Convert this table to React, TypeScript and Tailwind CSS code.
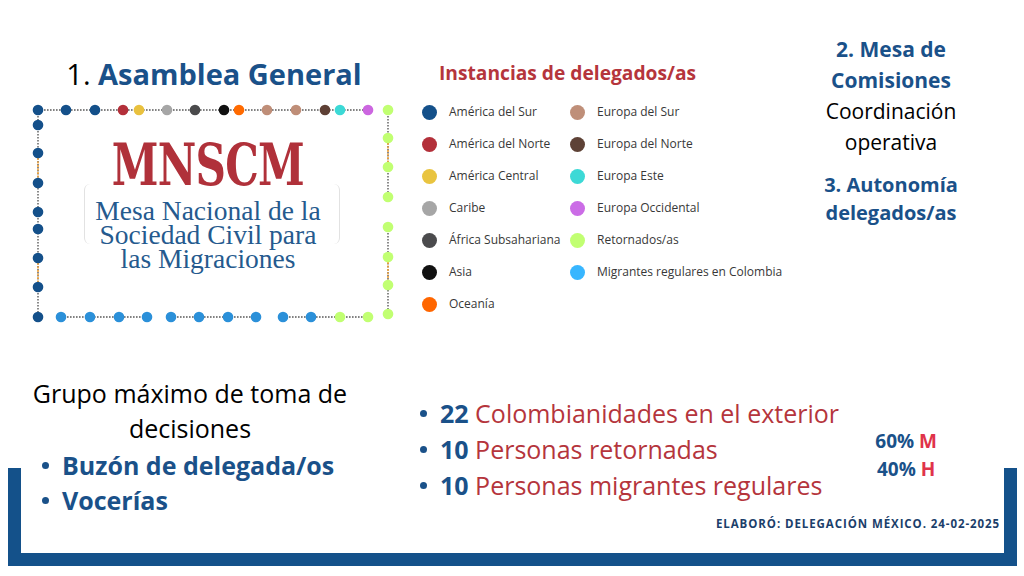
import React from "react";

const BLUE = "#1a5189";
const RED = "#b5353c";

type Dot = [number, number, string];

const C = {
  navy: "#14508a",
  red: "#b3303a",
  yellow: "#e9c13e",
  gray: "#a6a6a6",
  dark: "#4a4a4c",
  black: "#111111",
  orange: "#ff6a00",
  tan: "#bf8e78",
  brown: "#5e4035",
  cyan: "#3cd9d6",
  purple: "#cc66e0",
  lime: "#c1ff72",
  sky: "#2b90d9",
};

// frame dots, coordinates relative to the frame box
const frameDots: Dot[] = [
  // top row
  [10, 8, C.navy],
  [38, 8, C.navy],
  [67, 8, C.navy],
  [95, 8, C.red],
  [111, 8, C.yellow],
  [139, 8, C.gray],
  [167, 8, C.dark],
  [196, 8, C.black],
  [211, 8, C.orange],
  [239, 8, C.tan],
  [268, 8, C.tan],
  [297, 8, C.brown],
  [312, 8, C.cyan],
  [340, 8, C.purple],
  [360, 8, C.lime],
  // left column
  [10, 23, C.navy],
  [10, 51, C.navy],
  [10, 81, C.navy],
  [10, 110, C.navy],
  [10, 127, C.navy],
  [10, 156, C.navy],
  [10, 185, C.navy],
  [10, 215, C.navy],
  // right column
  [360, 36, C.lime],
  [360, 65, C.lime],
  [360, 95, C.lime],
  [360, 125, C.lime],
  [360, 155, C.lime],
  [360, 183, C.lime],
  [360, 212, C.lime],
  // bottom row
  [33, 215, C.sky],
  [62, 215, C.sky],
  [91, 215, C.sky],
  [119, 215, C.sky],
  [143, 215, C.sky],
  [171, 215, C.sky],
  [200, 215, C.sky],
  [228, 215, C.sky],
  [255, 215, C.sky],
  [283, 215, C.sky],
  [312, 215, C.lime],
  [340, 215, C.lime],
];

const grayLines = [
  [10, 8, 340, 8],
  [10, 8, 10, 215],
  [360, 8, 360, 95],
  [360, 125, 360, 215],
  [33, 215, 119, 215],
  [143, 215, 228, 215],
  [255, 215, 340, 215],
];

const orangeLines = [
  [10, 56, 10, 76],
  [10, 161, 10, 180],
  [360, 41, 360, 60],
  [360, 160, 360, 178],
];

const legendLeft: [string, string][] = [
  ["#14508a", "América del Sur"],
  ["#b3303a", "América del Norte"],
  ["#e9c440", "América Central"],
  ["#a6a6a6", "Caribe"],
  ["#4b4b4d", "África Subsahariana"],
  ["#111111", "Asia"],
  ["#ff6600", "Oceanía"],
];

const legendRight: [string, string][] = [
  ["#bf8f79", "Europa del Sur"],
  ["#5e4236", "Europa del Norte"],
  ["#3dd9d6", "Europa Este"],
  ["#cb6ce6", "Europa Occidental"],
  ["#c1ff72", "Retornados/as"],
  ["#38b6ff", "Migrantes regulares en Colombia"],
];

function DotFrame() {
  return (
    <svg
      className="absolute inset-0"
      width={372}
      height={226}
      viewBox="0 0 372 226"
    >
      {grayLines.map(([x1, y1, x2, y2], i) => (
        <line
          key={"g" + i}
          x1={x1}
          y1={y1}
          x2={x2}
          y2={y2}
          stroke="#5a5a5a"
          strokeWidth={1.4}
          strokeDasharray="1.6 1.4"
        />
      ))}
      {orangeLines.map(([x1, y1, x2, y2], i) => (
        <line
          key={"o" + i}
          x1={x1}
          y1={y1}
          x2={x2}
          y2={y2}
          stroke="#f2a33a"
          strokeWidth={1.6}
          strokeDasharray="2 1.5"
        />
      ))}
      {frameDots.map(([cx, cy, fill], i) => (
        <circle key={i} cx={cx} cy={cy} r={5.3} fill={fill} />
      ))}
    </svg>
  );
}

function LegendItem({ color, label }: { color: string; label: string }) {
  return (
    <div className="flex h-[32px] items-center gap-[12px]">
      <span
        className="h-[15px] w-[15px] shrink-0 rounded-full"
        style={{ backgroundColor: color }}
      />
      <span className="whitespace-nowrap text-[12px] text-[#383838]">
        {label}
      </span>
    </div>
  );
}

function Bullet({ className = "" }: { className?: string }) {
  return (
    <span
      className={"inline-block h-[7px] w-[7px] shrink-0 rounded-full " + className}
    />
  );
}

export default function App() {
  return (
    <div className="relative h-[576px] w-[1024px] overflow-hidden bg-white font-['Open_Sans',sans-serif]">
      {/* blue bracket at the bottom */}
      <div className="absolute left-[8px] top-[468px] h-[98px] w-[1009px] border-x-[13px] border-b-[13px] border-[#14518a]" />

      {/* top row */}
      <div className="flex h-[376px] items-start">
        {/* 1. Asamblea General */}
        <div className="ml-[28px] mt-[56px] flex w-[372px] flex-col">
          <h1 className="text-center text-[29px] leading-[36px] font-bold">
            <span className="font-normal text-black">1. </span>
            <span style={{ color: BLUE }}>Asamblea General</span>
          </h1>
          <div className="relative mt-[10px] h-[226px] w-[372px]">
            <DotFrame />
            <span className="absolute left-[56px] top-[82px] h-[60px] w-[6px] rounded-l-full border-l border-[#e2e2e2]" />
            <span className="absolute left-[306px] top-[82px] h-[60px] w-[6px] rounded-r-full border-r border-[#e2e2e2]" />
            <div className="relative flex flex-col items-center pr-[12px] pt-[34px]">
              <div className="scale-x-[0.74] font-['DejaVu_Serif','Liberation_Serif',serif] text-[57px] leading-none font-bold tracking-[-1px] text-[#b0313a]">
                MNSCM
              </div>
              <div className="mt-[6px] text-center font-['Liberation_Serif',serif] text-[27.5px] leading-[24px] text-[#255a8e]">
                <div>Mesa Nacional de la</div>
                <div>Sociedad Civil para</div>
                <div>las Migraciones</div>
              </div>
            </div>
          </div>
        </div>

        {/* Instancias de delegados/as */}
        <div className="ml-[10px] mt-[60px] flex w-[390px] flex-col">
          <h2
            className="pl-[29px] text-[19.2px] leading-[26px] font-bold"
            style={{ color: RED }}
          >
            Instancias de delegados/as
          </h2>
          <div className="mt-[10px] grid grid-cols-[148px_auto] pl-[12px]">
            <div className="flex flex-col">
              {legendLeft.map(([c, l]) => (
                <LegendItem key={l} color={c} label={l} />
              ))}
            </div>
            <div className="flex flex-col">
              {legendRight.map(([c, l]) => (
                <LegendItem key={l} color={c} label={l} />
              ))}
            </div>
          </div>
        </div>

        {/* 2. / 3. */}
        <div className="ml-[10px] mt-[34px] flex w-[162px] flex-col text-center">
          <div className="text-[21px] leading-[31px] font-bold" style={{ color: BLUE }}>
            <div>2. Mesa de</div>
            <div>Comisiones</div>
          </div>
          <div className="text-[21px] leading-[31px] text-black">
            <div>Coordinación</div>
            <div>operativa</div>
          </div>
          <div
            className="mt-[13px] text-[20px] leading-[28px] font-bold"
            style={{ color: BLUE }}
          >
            <div>3. Autonomía</div>
            <div>delegados/as</div>
          </div>
        </div>
      </div>

      {/* bottom row */}
      <div className="relative flex items-start">
        <div className="ml-[20px] flex w-[340px] flex-col">
          <p className="text-center text-[25px] leading-[35px] text-black">
            Grupo máximo de toma de
            <br />
            decisiones
          </p>
          <ul className="mt-[2px] text-[25px] leading-[35px] font-bold" style={{ color: BLUE }}>
            <li className="flex items-center gap-[13px] pl-[22px]">
              <Bullet className="bg-[#1a5189]" />
              Buzón de delegada/os
            </li>
            <li className="flex items-center gap-[13px] pl-[22px]">
              <Bullet className="bg-[#1a5189]" />
              Vocerías
            </li>
          </ul>
        </div>

        <div className="ml-[56px] flex w-[584px] flex-col">
          <div className="flex items-start">
            <ul className="ml-[4px] mt-[19px] flex flex-col text-[25px] leading-[36px]">
              {[
                ["22", "Colombianidades en el exterior"],
                ["10", "Personas retornadas"],
                ["10", "Personas migrantes regulares"],
              ].map(([n, t], i) => (
                <li key={i} className="flex items-center gap-[13px] whitespace-nowrap">
                  <Bullet className="bg-[#1a5189]" />
                  <span>
                    <span className="font-bold" style={{ color: BLUE }}>
                      {n}
                    </span>{" "}
                    <span style={{ color: RED }}>{t}</span>
                  </span>
                </li>
              ))}
            </ul>
            <div className="ml-auto mr-[63px] mt-[51px] flex flex-col items-center text-[19px] leading-[28px] font-bold">
              <div>
                <span style={{ color: BLUE }}>60%</span>{" "}
                <span className="text-[#e0334a]">M</span>
              </div>
              <div>
                <span style={{ color: BLUE }}>40%</span>{" "}
                <span className="text-[#e0334a]">H</span>
              </div>
            </div>
          </div>
          <p className="mt-[13px] text-right text-[11.5px] leading-[15px] font-bold tracking-[0.08em] text-[#1c3f6b]">
            ELABORÓ: DELEGACIÓN MÉXICO. 24-02-2025
          </p>
        </div>
      </div>
    </div>
  );
}
